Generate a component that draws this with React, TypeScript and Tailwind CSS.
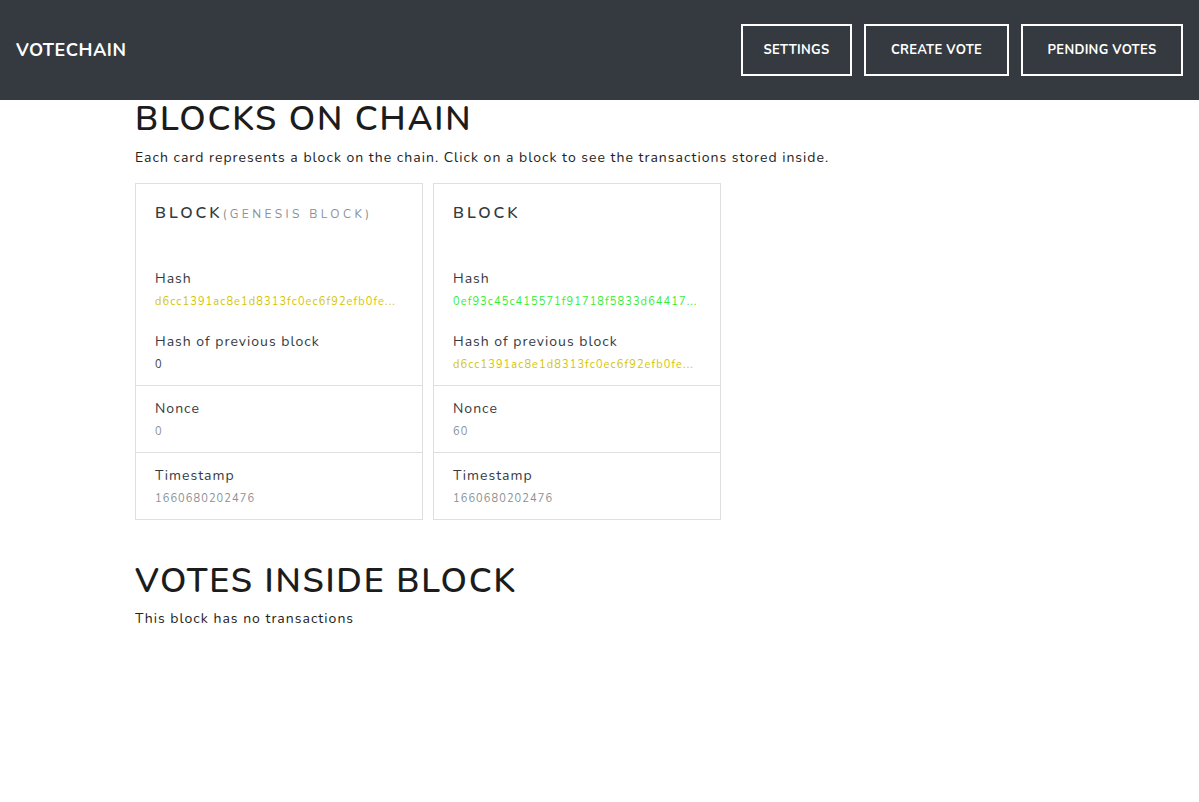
import React from "react";

const font = { fontFamily: '"Nunito", Lato, "Noto Sans", sans-serif' };

function Card({ title, sub, hash, hashColor, prev, prevColor, nonce, ts }: any) {
  return (
    <div className="w-[288px] border border-[#dfdfdf] bg-white">
      <div className="h-[201px] px-[19px] pt-[17px]">
        <div className="flex items-baseline">
          <span className="text-[16px] font-semibold tracking-[3px] text-[#343a40]">{title}</span>
          {sub && <span className="text-[12px] tracking-[3.4px] text-[#8a9096]">{sub}</span>}
        </div>
        <div className="mt-[43px] text-[14px] tracking-[1px] text-[#343a40]">Hash</div>
        <div className={`mt-[5px] text-[11px] tracking-[1.1px] ${hashColor}`}>{hash}</div>
        <div className="mt-[20px] text-[14px] tracking-[1px] text-[#343a40]">Hash of previous block</div>
        <div className={`mt-[5px] text-[11px] tracking-[1.1px] ${prevColor}`}>{prev}</div>
      </div>
      <div className="h-[67px] border-t border-[#dfdfdf] px-[19px] pt-[12px]">
        <div className="text-[14px] tracking-[1px] text-[#343a40]">Nonce</div>
        <div className="mt-[5px] text-[11px] tracking-[1.1px] text-[#8a9096]">{nonce}</div>
      </div>
      <div className="h-[67px] border-t border-[#dfdfdf] px-[19px] pt-[12px]">
        <div className="text-[14px] tracking-[1px] text-[#343a40]">Timestamp</div>
        <div className="mt-[5px] text-[11px] tracking-[1.1px] text-[#8a9096]">{ts}</div>
      </div>
    </div>
  );
}

export default function App() {
  return (
    <div style={font} className="min-h-[802px] bg-white">
      <header className="flex h-[100px] items-center justify-between bg-[#343a40] px-4">
        <div className="text-[18px] font-bold tracking-[0.5px] text-white">VOTECHAIN</div>
        <div className="flex gap-3">
          {[
            ["SETTINGS", "w-[111px]"],
            ["CREATE VOTE", "w-[145px]"],
            ["PENDING VOTES", "w-[162px]"],
          ].map(([t, w]) => (
            <button
              key={t}
              className={`${w} h-[52px] border-2 border-white pt-[1px] text-[13px] font-bold tracking-[0.3px] text-white`}
            >
              {t}
            </button>
          ))}
        </div>
      </header>
      <main className="px-[135px]">
        <h1 className="text-[34px] font-semibold leading-[38px] tracking-[1.8px] text-[#1c1c1c]">
          BLOCKS ON CHAIN
        </h1>
        <p className="mt-[10px] text-[14px] leading-[20px] tracking-[1px] text-[#222]">
          Each card represents a block on the chain. Click on a block to see the transactions stored inside.
        </p>
        <div className="mt-[15px] flex gap-[10px]">
          <Card
            title="BLOCK"
            sub="(GENESIS BLOCK)"
            hash="d6cc1391ac8e1d8313fc0ec6f92efb0fe..."
            hashColor="text-[#d4c400]"
            prev="0"
            prevColor="text-[#343a40]"
            nonce="0"
            ts="1660680202476"
          />
          <Card
            title="BLOCK"
            hash="0ef93c45c415571f91718f5833d64417..."
            hashColor="text-[#33ee33]"
            prev="d6cc1391ac8e1d8313fc0ec6f92efb0fe..."
            prevColor="text-[#d4c400]"
            nonce="60"
            ts="1660680202476"
          />
        </div>
        <h2 className="mt-[42px] text-[34px] font-semibold leading-[38px] tracking-[1.8px] text-[#1c1c1c]">
          VOTES INSIDE BLOCK
        </h2>
        <p className="mt-[9px] text-[14px] leading-[20px] tracking-[1px] text-[#222]">
          This block has no transactions
        </p>
      </main>
    </div>
  );
}
